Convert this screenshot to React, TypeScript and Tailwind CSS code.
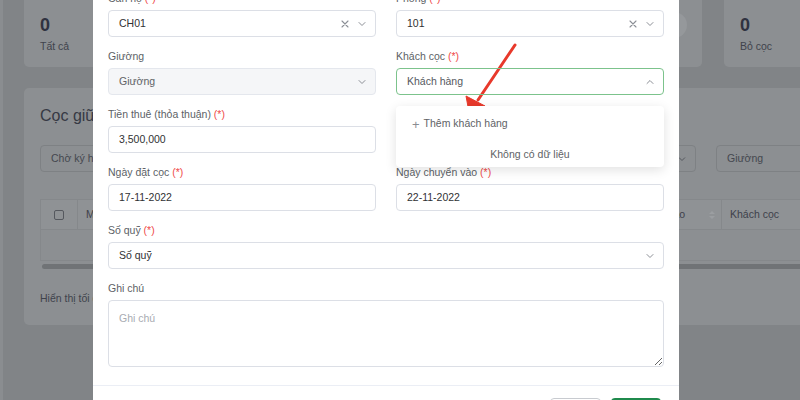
import React from "react";

const Chevron = ({ up = false }: { up?: boolean }) => (
    <svg width="10" height="10" viewBox="0 0 10 10" className="shrink-0">
        <path
            d={up ? "M2 6.5 L5 3.5 L8 6.5" : "M2 3.5 L5 6.5 L8 3.5"}
            fill="none"
            stroke="#8c8f96"
            strokeWidth="1"
            strokeLinecap="round"
            strokeLinejoin="round"
        />
    </svg>
);

const Clear = () => (
    <svg width="10" height="10" viewBox="0 0 10 10" className="shrink-0">
        <path d="M2 2 L8 8 M8 2 L2 8" fill="none" stroke="#8c8f96" strokeWidth="1.1" strokeLinecap="round" />
    </svg>
);

const Req = () => <span className="text-[#ef4a4a]"> (*)</span>;

type FieldProps = {
    label: string;
    required?: boolean;
    children: React.ReactNode;
    className?: string;
};

function Field({ label, required, children, className = "" }: FieldProps) {
    return (
        <div className={"relative mb-[11px] " + className}>
            <div className="h-4 leading-4 mb-1 text-[#5c5f66]">
                {label}
                {required && <Req />}
            </div>
            {children}
        </div>
    );
}

function Box({
    children,
    className = "",
}: {
    children: React.ReactNode;
    className?: string;
}) {
    return (
        <div
            className={
                "h-[27px] rounded-[4px] border flex items-center pl-[10px] pr-[8px] gap-[7px] " +
                className
            }
        >
            {children}
        </div>
    );
}

function Background() {
    const stats = [
        { n: "0", label: "Tất cả" },
        { n: "0", label: "Đã ký" },
        { n: "0", label: "Chờ ký" },
        { n: "0", label: "Hết hạn" },
        { n: "0", label: "Bỏ cọc" },
    ];
    const cols = [
        { name: "Mã cọc", w: "w-[130px]" },
        { name: "Căn hộ", w: "w-[130px]" },
        { name: "Phòng", w: "w-[130px]" },
        { name: "Ngày đặt cọc", w: "w-[132px]" },
    ];
    return (
        <div className="flex h-full">
            <div className="w-[3px] h-full bg-[#8a8d90] shrink-0" />
            <div className="flex-1 pl-[21px] text-[#3c3f49]">
                <div className="flex gap-[22px] -mt-[10px]">
                    {stats.map((s, i) => (
                        <div
                            key={i}
                            className="relative w-[153px] shrink-0 h-[77px] rounded-[5px] bg-[#8c8f92] pl-4 pt-[24px]"
                        >
                            <div className="text-[18px] leading-[22px] font-bold text-[#2f3240]">{s.n}</div>
                            <div className="mt-[2px] text-[10.5px] leading-4 text-[#40434c]">{s.label}</div>
                            <div className="absolute right-[15px] top-[22px] w-[26px] h-[26px] rounded-full bg-[#95989b]" />
                        </div>
                    ))}
                </div>
                <div className="mt-[21px] h-[237px] rounded-[5px] bg-[#8c8f92] pl-4 pt-[17px]">
                    <div className="text-[16px] leading-[22px] text-[#363944]">Cọc giữ chỗ</div>
                    <div className="mt-[18px] flex gap-5">
                        {["Chờ ký hợp đồng", "Căn hộ", "Phòng", "Trạng thái", "Giường"].map((t, i) => (
                            <div
                                key={i}
                                className="w-[149px] h-[27px] shrink-0 rounded-[4px] border border-[#7e8184] flex items-center justify-between pl-[10px] pr-[8px] text-[10.5px] text-[#44474f]"
                            >
                                <span>{t}</span>
                                <svg width="10" height="10" viewBox="0 0 10 10">
                                    <path d="M2 3.5 L5 6.5 L8 3.5" fill="none" stroke="#55585e" strokeWidth="1" />
                                </svg>
                            </div>
                        ))}
                    </div>
                    <div className="mt-[27px] flex flex-col">
                        <div className="flex h-[30px] bg-[#8f9295] border-t border-l border-[#85888b] text-[10.5px] text-[#3e414b]">
                            <div className="w-[37px] shrink-0 border-r border-[#85888b] flex items-center justify-center">
                                <div className="w-[10px] h-[10px] rounded-[2px] border border-[#55585e]" />
                            </div>
                            {cols.map((c) => (
                                <div key={c.name} className={c.w + " shrink-0 pl-2 flex items-center"}>
                                    {c.name}
                                </div>
                            ))}
                            <div className="w-[122px] shrink-0 pl-[4px] pr-[5px] flex items-center justify-between border-r border-[#85888b]">
                                <span>Ngày chuyển vào</span>
                                <svg width="8" height="12" viewBox="0 0 8 12">
                                    <path d="M4 2 L7 5 H1 Z M4 10 L7 7 H1 Z" fill="#9b9ea1" />
                                </svg>
                            </div>
                            <div className="w-[130px] shrink-0 pl-2 flex items-center">Khách cọc</div>
                        </div>
                        <div className="h-[31px] border-t border-l border-[#85888b]" />
                        <div className="h-[10px] pt-[3px] pl-[2px] border-t border-[#85888b]">
                            <div className="h-[5px] rounded-l-full bg-[#707376]" />
                        </div>
                    </div>
                    <div className="mt-[21px] text-[10.5px] text-[#40434c]">Hiển thị tối đa 20 bản ghi</div>
                </div>
            </div>
        </div>
    );
}

function Modal() {
    return (
        <div className="absolute left-[93px] top-[-26px] w-[586px] bg-white text-[10.5px] text-[#303133]">
            <div className="px-[15px] pt-4">
                <div className="grid grid-cols-2 gap-x-5">
                    <Field label="Căn hộ" required>
                        <Box className="border-[#dcdfe6]">
                            <span className="flex-1">CH01</span>
                            <Clear />
                            <Chevron />
                        </Box>
                    </Field>
                    <Field label="Phòng" required>
                        <Box className="border-[#dcdfe6]">
                            <span className="flex-1">101</span>
                            <Clear />
                            <Chevron />
                        </Box>
                    </Field>
                    <Field label="Giường">
                        <Box className="border-[#e4e7ed] bg-[#f5f6f8]">
                            <span className="flex-1 text-[#606266]">Giường</span>
                            <Chevron />
                        </Box>
                    </Field>
                    <Field label="Khách cọc" required className="z-10">
                        <Box className="border-[#7cc38c]">
                            <span className="flex-1 text-[#55585e]">Khách hàng</span>
                            <Chevron up />
                        </Box>
                        <div className="absolute left-0 right-0 top-[58px] h-[61px] rounded-[4px] bg-white shadow-[0_3px_12px_rgba(0,0,0,0.12)] text-[#606266]">
                            <div className="h-9 pl-4 flex items-center gap-[4px]">
                                <span className="text-[13px] leading-none text-[#8a8d93]">+</span>
                                <span>Thêm khách hàng</span>
                            </div>
                            <div className="h-[25px] flex items-center justify-center">Không có dữ liệu</div>
                        </div>
                    </Field>
                    <Field label="Tiền thuê (thỏa thuận)" required>
                        <Box className="border-[#dcdfe6]">
                            <span>3,500,000</span>
                        </Box>
                    </Field>
                    <div />
                    <Field label="Ngày đặt cọc" required>
                        <Box className="border-[#dcdfe6]">
                            <span>17-11-2022</span>
                        </Box>
                    </Field>
                    <Field label="Ngày chuyển vào" required>
                        <Box className="border-[#dcdfe6]">
                            <span>22-11-2022</span>
                        </Box>
                    </Field>
                    <Field label="Số quỹ" required className="col-span-2">
                        <Box className="border-[#dcdfe6]">
                            <span className="flex-1">Số quỹ</span>
                            <Chevron />
                        </Box>
                    </Field>
                    <Field label="Ghi chú" className="col-span-2 !mb-[18px]">
                        <textarea
                            readOnly
                            placeholder="Ghi chú"
                            className="block w-full h-[67px] rounded-[4px] border border-[#dcdfe6] px-[10px] py-[10px] outline-none placeholder:text-[#a8abb2]"
                        />
                    </Field>
                </div>
            </div>
            <div className="border-t border-[#ebeef5] px-[18px] pt-3 pb-4 flex justify-end gap-[10px]">
                <div className="w-[51px] h-[28px] rounded-[4px] border border-[#c8cbd0] bg-white" />
                <div className="w-[50px] h-[28px] rounded-[4px] bg-[#1f8a4c]" />
            </div>
        </div>
    );
}

function Arrow() {
    return (
        <svg className="absolute inset-0 pointer-events-none" width="800" height="400" viewBox="0 0 800 400">
            <line x1="515" y1="45" x2="478" y2="100" stroke="#e8392b" strokeWidth="3" strokeLinecap="round" />
            <path d="M469 112 L466 96 L485 106 Z" fill="#e8392b" stroke="#e8392b" strokeWidth="1" strokeLinejoin="round" />
        </svg>
    );
}

export default function App() {
    return (
        <div className="relative w-[800px] h-[400px] overflow-hidden bg-[#818487] font-['Liberation_Sans',Arial,sans-serif]">
            <Background />
            <Modal />
            <Arrow />
        </div>
    );
}
